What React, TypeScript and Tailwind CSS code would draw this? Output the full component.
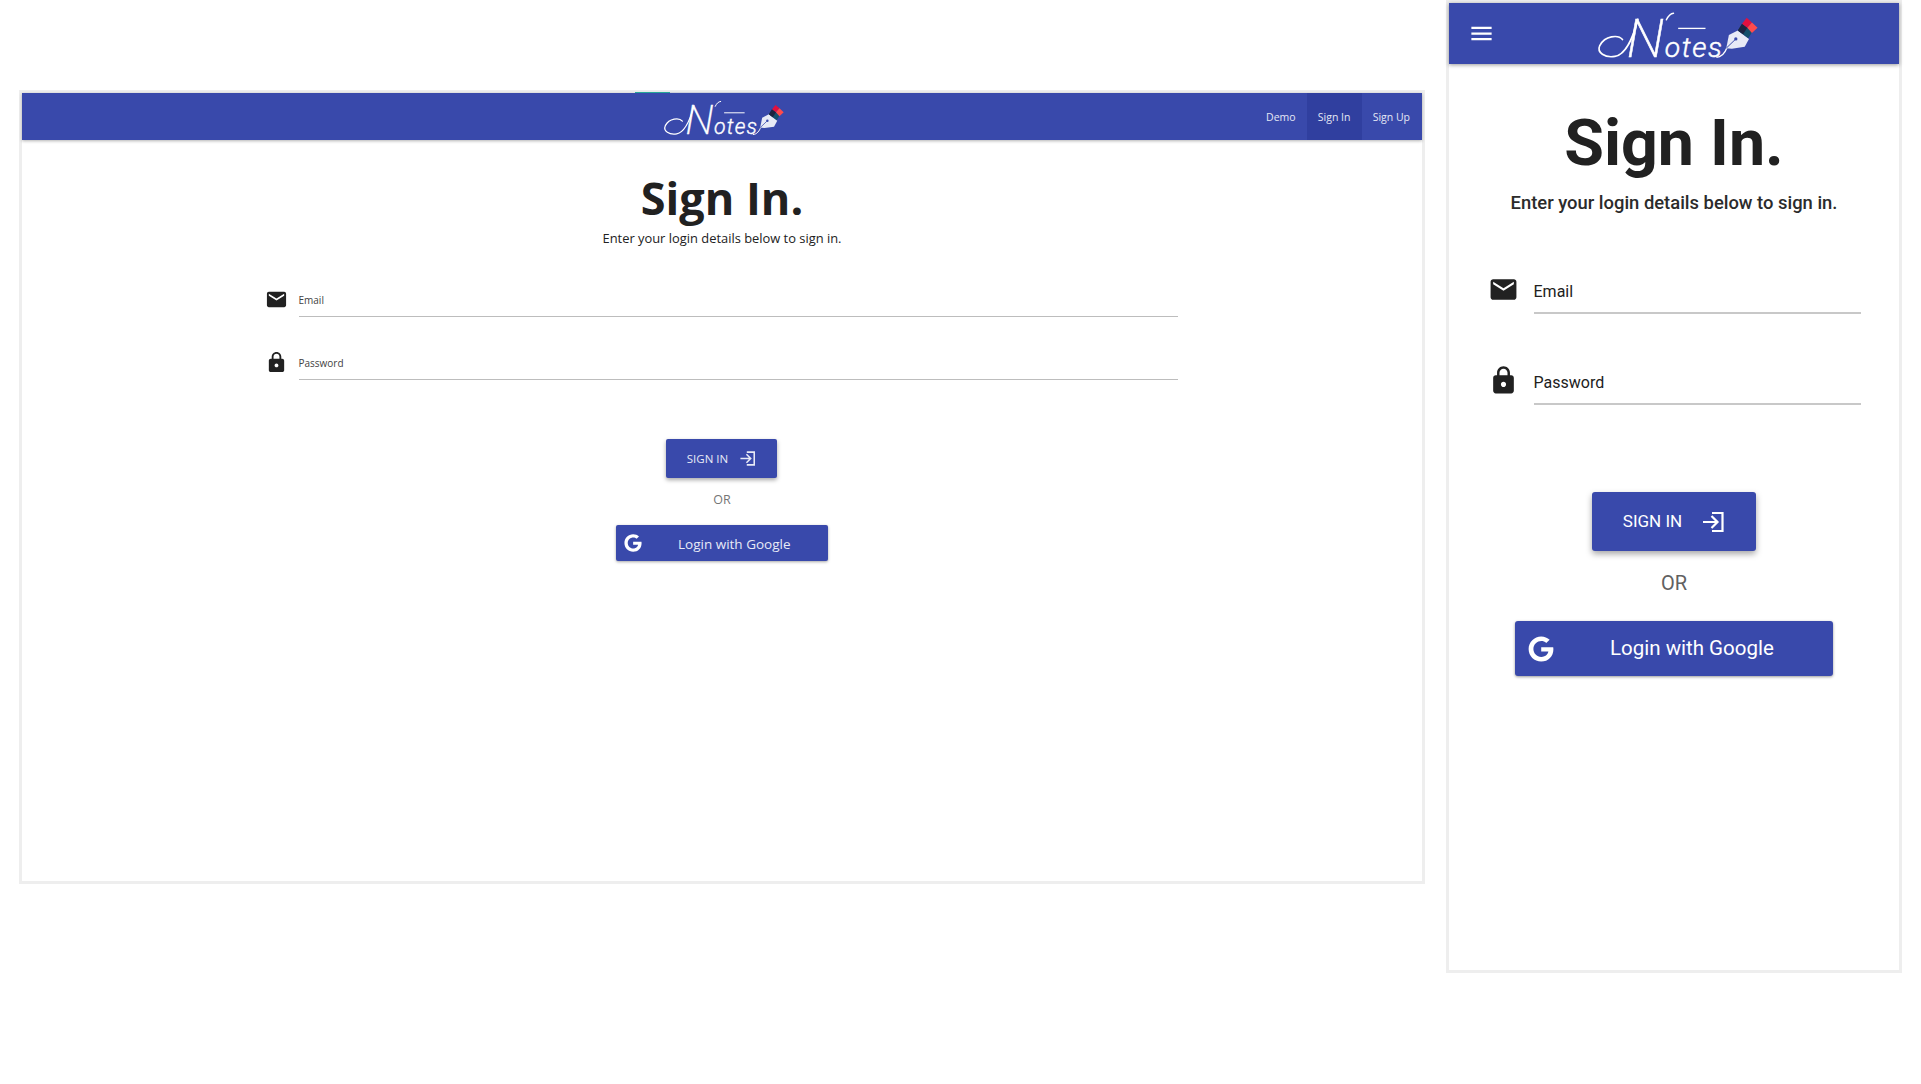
import React from "react";
import { FaGoogle } from "react-icons/fa";
import { MdEmail, MdLock, MdMenu } from "react-icons/md";

const Logo: React.FC<{ className: string }> = ({ className }) => (
  <svg viewBox="465 10 493 170" className={`overflow-visible ${className}`} role="img" aria-label="Notes">
    {/* swash into the N */}
    <path
      d="M543 112C530 96 490 100 474 130C464 152 490 168 520 163C555 157 575 105 590 50"
      fill="none"
      stroke="#fff"
      strokeWidth="5"
      strokeLinecap="round"
    />
    <path d="M676 52C682 40 688 33 698 32" fill="none" stroke="#fff" strokeWidth="4" strokeLinecap="round" />
    <text fill="#fff" stroke="#fff" strokeWidth="1.5" fontFamily="Roboto, sans-serif" fontStyle="italic" fontWeight="200">
      <tspan x="556" y="164" fontSize="165">
        N
      </tspan>
      <tspan x="671" y="165" fontSize="86" fontWeight="300" letterSpacing="5">
        otes
      </tspan>
    </text>
    <path d="M712 78H795" stroke="#fff" strokeWidth="4" />
    <path d="M828 166C845 166 855 150 860 137" fill="none" stroke="#fff" strokeWidth="4" />
    {/* pen nib */}
    <path d="M858 138L866 98L893 84L927 110L914 134L875 140Z" fill="#e8eaf6" />
    <path d="M858 138L885 112" stroke="#3949ab" strokeWidth="3" />
    <circle cx="887" cy="110" r="5" fill="#3949ab" />
    <path d="M893 84L906 64L922 76L936 90L925 108Z" fill="#14506b" />
    <path d="M893 84L906 64L922 76L909 96Z" fill="#1c2340" />
    <path d="M906 64L920 46L936 60L922 76Z" fill="#e2103f" />
    <path d="M922 76L936 60L953 76L936 92Z" fill="#ff4b4b" />
  </svg>
);

const LoginIcon: React.FC<{ className: string }> = ({ className }) => (
  <svg viewBox="0 0 24 24" fill="none" stroke="currentColor" strokeWidth="2.2" className={className}>
    <path d="M2 12H16M10.5 6L16.5 12L10.5 18" />
    <path d="M11 3H21.5V21H11" />
  </svg>
);

const DesktopFrame: React.FC = () => (
  <section
    className="mt-[90px] h-[794px] w-[1406px] shrink-0 border-[3px] border-[#eeeeee] bg-white text-[#212121]"
    style={{ fontFamily: '"Open Sans", sans-serif' }}
  >
    <header className="relative grid h-[47px] grid-cols-[1fr_auto_1fr] items-stretch bg-[#3949ab] shadow-[0_1px_3px_rgba(0,0,0,0.3)]">
      <div className="absolute -top-[1.5px] left-[613px] flex h-[1.5px]">
        <span className="w-[35px] bg-[#26a69a]" />
        <span className="w-[140px] bg-[#cfd2dc]" />
      </div>
      <div />
      <div className="ml-[4px] flex items-center">
        <Logo className="h-[42px] w-[122px]" />
      </div>
      <nav className="flex justify-end text-[10.5px] text-[#e4e7f5]">
        <a className="flex items-center px-[11px] pt-[2px]">Demo</a>
        <a className="flex w-[55px] items-center justify-center bg-[#303f9f] pt-[2px]">Sign In</a>
        <a className="flex items-center pt-[2px] pr-[12px] pl-[11px]">Sign Up</a>
      </nav>
    </header>
    <main className="flex flex-col items-center pt-[28px]">
      <h1 className="h-[60px] text-[45px] leading-[60px] font-bold">Sign In.</h1>
      <p className="h-[20px] text-[12.9px] leading-[20px] font-medium">Enter your login details below to sign in.</p>
      <div className="mt-[37px] flex w-[911px] items-center gap-3">
        <span className="mb-[3px] flex w-[20px] shrink-0 justify-center">
          <MdEmail className="shrink-0" size={23} />
        </span>
        <div className="flex h-[32px] flex-1 items-center border-b-[1.5px] border-[#bdbdbd] text-[10px] text-[#424242]">Email</div>
      </div>
      <div className="mt-[31px] flex w-[911px] items-center gap-3">
        <span className="mb-[3px] flex w-[20px] shrink-0 justify-center">
          <MdLock className="shrink-0" size={23} />
        </span>
        <div className="flex h-[32px] flex-1 items-center border-b-[1.5px] border-[#bdbdbd] text-[10px] text-[#424242]">Password</div>
      </div>
      <button
        type="button"
        className="mt-[59px] mr-[1px] flex h-[39px] w-[111px] items-center justify-center gap-[11px] rounded-[2px] bg-[#3949ab] text-[11.5px] text-[#e8eaf6] shadow-[0_2px_4px_rgba(0,0,0,0.35)]"
      >
        SIGN IN
        <LoginIcon className="h-[17px] w-[17px]" />
      </button>
      <p className="mt-[12px] h-[20px] text-[12.5px] leading-[20px] text-[#757575]">OR</p>
      <button
        type="button"
        className="mt-[15px] flex h-[36px] w-[212px] items-center gap-[36px] rounded-[2px] bg-[#3949ab] pl-[8px] text-[13.5px] text-[#e8eaf6] shadow-[0_1px_3px_rgba(0,0,0,0.35)]"
      >
        <FaGoogle size={18} color="#fff" />
        <span className="pt-[2px]">Login with Google</span>
      </button>
    </main>
  </section>
);

const MobileFrame: React.FC = () => (
  <section
    className="h-[973px] w-[456px] shrink-0 border-[3px] border-[#eeeeee] bg-white text-[#212121]"
    style={{ fontFamily: "Roboto, sans-serif" }}
  >
    <header className="grid h-[61px] grid-cols-[1fr_auto_1fr] items-center bg-[#3949ab] shadow-[0_1px_4px_rgba(0,0,0,0.4)]">
      <div className="pl-[19px] text-white">
        <MdMenu size={27} />
      </div>
      <Logo className="ml-[7px] h-[56px] w-[164px]" />
      <div />
    </header>
    <main className="flex flex-col items-center pt-[41px]">
      <h1 className="h-[76px] text-[64.5px] leading-[76px] font-bold">Sign In.</h1>
      <p className="mt-[8px] h-[28px] text-[18.4px] leading-[28px] font-medium text-[#2b2b2b]">Enter your login details below to sign in.</p>
      <div className="mt-[51px] flex w-[373px] items-center gap-[15px]">
        <MdEmail className="mb-[3px] shrink-0" size={31} />
        <div className="flex h-[46px] flex-1 items-center border-b-2 border-[#c8c8c8] pt-[3px] text-[16px]">Email</div>
      </div>
      <div className="mt-[45px] flex w-[373px] items-center gap-[15px]">
        <MdLock className="mb-[3px] shrink-0" size={31} />
        <div className="flex h-[46px] flex-1 items-center border-b-2 border-[#c8c8c8] pt-[3px] text-[16px]">Password</div>
      </div>
      <button
        type="button"
        className="mt-[87px] flex h-[59px] w-[164px] items-center justify-center gap-[19px] rounded-[3px] bg-[#3949ab] text-[17px] text-white shadow-[0_3px_6px_rgba(0,0,0,0.35)]"
      >
        SIGN IN
        <LoginIcon className="h-[24px] w-[24px]" />
      </button>
      <p className="mt-[20px] h-[24px] text-[20px] leading-[24px] text-[#616161]">OR</p>
      <button
        type="button"
        className="mt-[26px] flex h-[55px] w-[318px] items-center gap-[56px] rounded-[3px] bg-[#3949ab] pl-[13px] text-[20.5px] text-white shadow-[0_1px_3px_rgba(0,0,0,0.4)]"
      >
        <FaGoogle size={26} />
        Login with Google
      </button>
    </main>
  </section>
);

export default function App() {
  return (
    <div className="flex min-h-[1084px] items-start gap-[21px] bg-white pl-[19px]">
      <DesktopFrame />
      <MobileFrame />
    </div>
  );
}
